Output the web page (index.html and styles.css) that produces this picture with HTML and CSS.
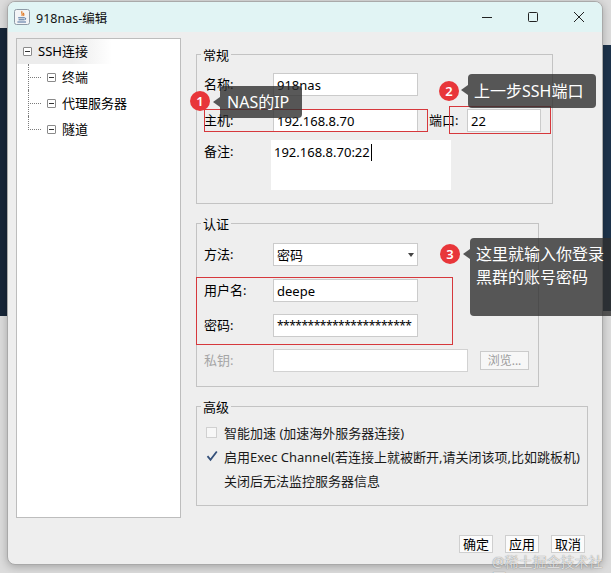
FILE: index.html
```html
<!DOCTYPE html>
<html lang="zh-CN">
<head>
<meta charset="utf-8">
<title>918nas-编辑</title>
<link rel="stylesheet" href="styles.css">
</head>
<body>
<div class="desk">
  <div class="bg-left"></div>
  <div class="bg-right"></div>

  <div class="window">
    <div class="titlebar">
      <svg class="app-icon" viewBox="0 0 16 16" width="16" height="16">
        <rect x="0.5" y="0.5" width="15" height="15" rx="2" fill="#f3f4f6" stroke="#8e9aa6"/>
        <path d="M8.2 2.2c-1.6 1.5 1.1 2.4-0.4 4.6M9.8 3.8c-1 1 0.9 1.6-0.3 3" stroke="#e0741e" fill="none" stroke-width="1.2"/>
        <path d="M4.2 8.8h6.3M4.6 10.8h5.6M3.4 13h8.6" stroke="#4b6d9c" stroke-width="1"/>
        <path d="M10.5 8.8c1.6 0 1.6 2 0 2" stroke="#4b6d9c" fill="none" stroke-width="1"/>
      </svg>
      <span class="title">918nas-编辑</span>
      <div class="controls">
        <span class="ctl"><svg width="12" height="12" viewBox="0 0 12 12"><path d="M1 6.5h10" stroke="#222" stroke-width="1"/></svg></span>
        <span class="ctl"><svg width="12" height="12" viewBox="0 0 12 12"><rect x="1.5" y="1.5" width="9" height="9" rx="1" fill="none" stroke="#222" stroke-width="1"/></svg></span>
        <span class="ctl"><svg width="12" height="12" viewBox="0 0 12 12"><path d="M1 1l10 10M11 1L1 11" stroke="#222" stroke-width="1"/></svg></span>
      </div>
    </div>

    <div class="content">
      <div class="tree">
        <div class="tree-root"><span class="toggle"></span><span class="node-text">SSH连接</span></div>
        <div class="children">
          <div class="child"><span class="toggle"></span><span class="node-text">终端</span></div>
          <div class="child"><span class="toggle"></span><span class="node-text">代理服务器</span></div>
          <div class="child last"><span class="toggle"></span><span class="node-text">隧道</span></div>
        </div>
      </div>

      <div class="form">
        <fieldset class="group g-general">
          <legend>常规</legend>
          <div class="row first">
            <span class="lbl">名称:</span>
            <div class="input w-main">918nas</div>
          </div>
          <div class="row">
            <span class="lbl">主机:</span>
            <div class="input w-main">192.168.8.70</div>
            <span class="port-lbl">端口:</span>
            <div class="input w-port">22</div>
          </div>
          <div class="row row-note">
            <span class="lbl lbl-top">备注:</span>
            <div class="textarea">192.168.8.70:22<span class="caret"></span></div>
          </div>
        </fieldset>

        <fieldset class="group g-auth">
          <legend>认证</legend>
          <div class="row first">
            <span class="lbl">方法:</span>
            <div class="input w-main select">密码<span class="arrow"></span></div>
          </div>
          <div class="row gap wide">
            <span class="lbl">用户名:</span>
            <div class="input w-main">deepe</div>
          </div>
          <div class="row gap">
            <span class="lbl">密码:</span>
            <div class="input w-main pwd">**********************</div>
          </div>
          <div class="row gap">
            <span class="lbl disabled">私钥:</span>
            <div class="input w-key"></div>
            <span class="btn-browse">浏览...</span>
          </div>
        </fieldset>

        <fieldset class="group g-adv">
          <legend>高级</legend>
          <div class="chk-row first">
            <span class="chk"></span>
            <span>智能加速 (加速海外服务器连接)</span>
          </div>
          <div class="chk-row">
            <svg class="check" width="12" height="12" viewBox="0 0 12 12"><path d="M1.5 6.2l3 3.6L10.8 1.5" stroke="#34507a" stroke-width="1.8" fill="none"/></svg>
            <span>启用Exec Channel(若连接上就被断开,请关闭该项,比如跳板机)</span>
          </div>
          <div class="chk-row indent">
            <span>关闭后无法监控服务器信息</span>
          </div>
        </fieldset>

        <div class="buttons">
          <span class="btn">确定</span>
          <span class="btn">应用</span>
          <span class="btn">取消</span>
        </div>
      </div>
    </div>
  </div>

  <div class="mark m1"></div>
  <div class="mark m2"></div>
  <div class="mark m3"></div>

  <span class="badge b1">1</span>
  <div class="tip t1">NAS的IP</div>
  <span class="badge b2">2</span>
  <div class="tip t2">上一步SSH端口</div>
  <span class="badge b3">3</span>
  <div class="tip t3">这里就输入你登录<br>黑群的账号密码</div>

  <div class="wm">@稀土掘金技术社区</div>
</div>
</body>
</html>
```

FILE: styles.css
```css
* { box-sizing: border-box; }
html, body { margin: 0; padding: 0; }
body {
  width: 611px;
  height: 573px;
  overflow: hidden;
  background: #dcdcdc;
  font-family: "Noto Sans", "Noto Sans CJK SC", sans-serif;
  font-size: 13px;
  color: #000;
}
.desk { position: relative; width: 611px; height: 573px; }

.bg-left { position: absolute; left: 0; top: 28px; width: 7px; height: 288px; background: #172638; }
.bg-right { position: absolute; left: 603px; top: 45px; width: 8px; height: 266px; background: #1d334b; }

.window {
  position: absolute;
  left: 7px;
  top: 1px;
  width: 596px;
  height: 564px;
  border: 1px solid #a9a9a9;
  border-radius: 8px;
  background: #eeeeee;
  box-shadow: 0 2px 8px rgba(0, 0, 0, .25);
  display: flex;
  flex-direction: column;
}

.titlebar {
  height: 30px;
  flex: none;
  display: flex;
  align-items: center;
  background: #e1f4f4;
  border-radius: 7px 7px 0 0;
  padding-left: 6px;
}
.app-icon { flex: none; margin-right: 6px; }
.title { font-size: 12.5px; color: #111; }
.controls { margin-left: auto; display: flex; }
.ctl { width: 46px; height: 30px; display: flex; align-items: center; justify-content: center; }

.content { flex: 1; display: flex; align-items: flex-start; padding: 6px 0 0 8px; }

.tree {
  flex: none;
  width: 165px;
  height: 480px;
  border: 1px solid #bdbdbd;
  background: #fff;
}
.tree-root {
  height: 25px;
  display: flex;
  align-items: center;
  padding-left: 6px;
  background: linear-gradient(90deg, #ececec 0, #ececec 55px, #ffffff 95px);
}
.toggle {
  flex: none;
  width: 9px;
  height: 9px;
  border: 1px solid #8a8a8a;
  border-radius: 1px;
  background: #fff;
  position: relative;
}
.toggle::after {
  content: "";
  position: absolute;
  left: 1px;
  top: 3px;
  width: 5px;
  border-top: 1px solid #333;
}
.node-text { margin-left: 6px; font-size: 13px; line-height: 17px; }
.children { position: relative; }
.child {
  height: 26px;
  display: flex;
  align-items: center;
  padding-left: 30px;
  position: relative;
}
.child::before {
  content: "";
  position: absolute;
  left: 11px;
  top: 13px;
  width: 13px;
  border-top: 1px dotted #7a7a7a;
}
.child::after {
  content: "";
  position: absolute;
  left: 11px;
  top: 0;
  height: 26px;
  border-left: 1px dotted #7a7a7a;
}
.child.last::after { height: 14px; }

.form {
  margin-left: 15px;
  padding-top: 8px;
  display: flex;
  flex-direction: column;
  align-items: flex-start;
}
.group {
  margin: 0;
  border: 1px solid #c3c3c3;
  padding: 0 0 0 7px;
  min-width: 0;
}
.group legend {
  display: block;
  height: 17px;
  padding: 0 2px;
  margin-left: -3px;
  line-height: 17px;
  font-size: 13px;
  font-family: "Noto Sans CJK SC", sans-serif;
}
.g-general { width: 357px; padding-bottom: 13px; }
.g-auth { width: 343px; margin-top: 11px; padding-bottom: 14px; }
.g-adv { width: 392px; margin-top: 11px; padding-top: 5px; padding-bottom: 13px; }

.row { display: flex; align-items: center; height: 23px; margin-top: 13px; }
.row.first { margin-top: 10px; }
.g-auth .row.first { margin-top: 11px; }
.row.gap { margin-top: 12px; }
.row.gap.wide { margin-top: 13px; }
.lbl { flex: none; width: 69px; line-height: 17px; }
.lbl.disabled { color: #a6a6a6; }
.input {
  flex: none;
  height: 23px;
  border: 1px solid #cbcbcb;
  background: #fff;
  padding-left: 3px;
  display: flex;
  align-items: center;
  font-size: 13px;
  white-space: nowrap;
  overflow: hidden;
}
.w-main { width: 145px; }
.w-port { width: 74px; }
.w-key { width: 195px; border-color: #d2d2d2; }
.port-lbl { flex: none; width: 38px; margin-left: 11px; line-height: 17px; }
.pwd { font-size: 12px; letter-spacing: -0.5px; }
.select .arrow {
  margin-left: auto;
  margin-right: 3px;
  border-top: 4px solid #444;
  border-left: 3.5px solid transparent;
  border-right: 3.5px solid transparent;
}

.row-note { height: 50px; margin-top: 8px; align-items: flex-start; }
.lbl-top { width: 67px; line-height: 23px; }
.textarea {
  width: 180px;
  height: 50px;
  background: #fff;
  padding: 3px 0 0 3px;
  line-height: 18px;
  white-space: nowrap;
}
.caret {
  display: inline-block;
  width: 1px;
  height: 17px;
  background: #000;
  vertical-align: -4px;
  margin-left: 1px;
}

.btn-browse {
  flex: none;
  width: 49px;
  height: 19px;
  margin-left: 12px;
  border: 1px solid #cbcbcb;
  background: #f7f7f7;
  color: #9c9c9c;
  font-size: 12px;
  line-height: 17px;
  text-align: center;
}

.chk-row { display: flex; align-items: center; height: 24px; color: #1a1a1a; }
.chk {
  flex: none;
  width: 11px;
  height: 11px;
  margin: 0 7px 0 2px;
  border: 1px solid #d0d0d0;
  background: #f7f7f7;
}
.check { flex: none; margin: 0 6px 0 2px; }
.chk-row.indent { padding-left: 20px; }

.buttons {
  align-self: stretch;
  display: flex;
  justify-content: flex-end;
  gap: 12px;
  margin-top: 29px;
  padding-right: 3px;
}
.btn {
  width: 34px;
  height: 18px;
  border: 1px solid #cfcfcf;
  background: #fbfbfb;
  font-size: 13px;
  line-height: 16px;
  text-align: center;
}

.mark { position: absolute; border: 1px solid #d6383c; }
.m1 { left: 204px; top: 109px; width: 224px; height: 23px; }
.m2 { left: 449px; top: 106px; width: 102px; height: 28px; }
.m3 { left: 196px; top: 277px; width: 257px; height: 68px; }

.badge {
  position: absolute;
  width: 20px;
  height: 20px;
  border-radius: 50%;
  background: #e8363a;
  color: #fff;
  font-size: 13px;
  font-weight: 600;
  line-height: 20px;
  text-align: center;
}
.b1 { left: 190px; top: 91px; }
.b2 { left: 439px; top: 81px; }
.b3 { left: 440px; top: 244px; }

.tip {
  position: absolute;
  background: rgba(48, 48, 48, .8);
  color: #fff;
  font-size: 16px;
  border-radius: 4px;
  white-space: nowrap;
}
.tip::before {
  content: "";
  position: absolute;
  left: -7px;
  top: 16px;
  margin-top: -5px;
  border-top: 5px solid transparent;
  border-bottom: 5px solid transparent;
  border-right: 7px solid rgba(48, 48, 48, .8);
}
.t1 { left: 220px; top: 86px; width: 82px; height: 32px; padding-left: 7px; line-height: 32px; }
.t2 { left: 468px; top: 74px; width: 128px; height: 34px; padding-left: 6px; line-height: 34px; }
.t3 { left: 470px; top: 238px; width: 150px; height: 78px; padding: 5px 0 0 6px; line-height: 23px; }

.wm {
  position: absolute;
  left: 492px;
  top: 554px;
  font-size: 14px;
  line-height: 16px;
  color: rgba(255, 255, 255, .75);
  text-shadow: 0 0 1px rgba(90, 90, 90, .9);
}
```
